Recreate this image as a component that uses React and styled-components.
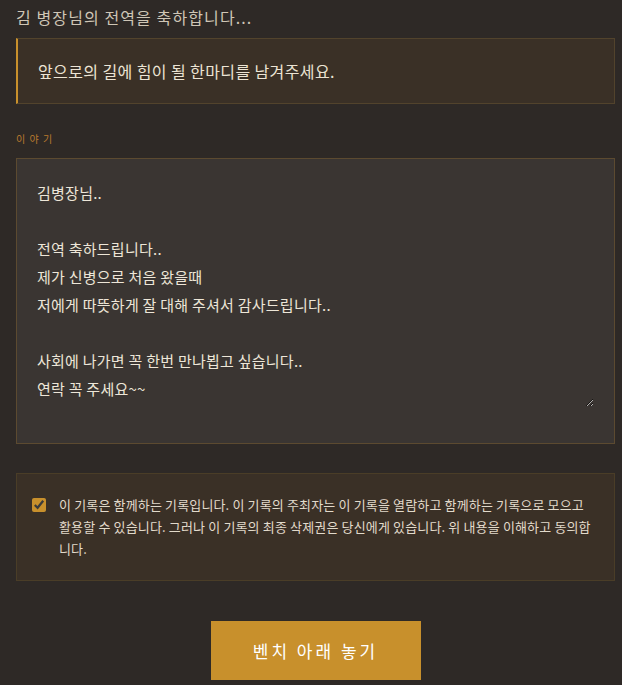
import React, {useState} from 'react';
import styled, {createGlobalStyle} from "styled-components";

const gold = "#c8902c"
const font = `"Noto Sans CJK KR", "Noto Sans", sans-serif`

const story = `김병장님..

전역 축하드립니다..
제가 신병으로 처음 왔을때
저에게 따뜻하게 잘 대해 주셔서 감사드립니다..

사회에 나가면 꼭 한번 만나뵙고 싶습니다..
연락 꼭 주세요~~`

const App = () => {
    const [text, setText] = useState(story)
    const [agree, setAgree] = useState(true)

    return (
        <>
            <GlobalStyle/>
            <Page>
                <Title>김 병장님의 전역을 축하합니다...</Title>
                <Quote>앞으로의 길에 힘이 될 한마디를 남겨주세요.</Quote>
                <Label>이 야 기</Label>
                <StoryBox>
                    <Story value={text} onChange={e => setText(e.target.value)}/>
                </StoryBox>
                <Consent>
                    <Check type="checkbox" checked={agree} onChange={e => setAgree(e.target.checked)}/>
                    <ConsentText>
                        이 기록은 함께하는 기록입니다. 이 기록의 주최자는 이 기록을 열람하고 함께하는 기록으로 모으고
                        활용할 수 있습니다. 그러나 이 기록의 최종 삭제권은 당신에게 있습니다. 위 내용을 이해하고 동의합니다.
                    </ConsentText>
                </Consent>
                <Actions>
                    <Button>벤치 아래 놓기</Button>
                </Actions>
            </Page>
        </>
    );
};

const GlobalStyle = createGlobalStyle`
body{
margin:0;
background:#2e2926;
font-family:${font};
}
`
const Page = styled.div`
width:599px;
padding:5px 0 0 16px;
display:flex;
flex-direction:column;
`
const Title = styled.div`
font-size:16px;
line-height:24px;
letter-spacing:1.1px;
color:#cfc6b6;
margin-bottom:9px;
`
const Quote = styled.div`
background:#3a3026;
border:1px solid #52432c;
border-left:2px solid ${gold};
padding:0 20px;
height:64px;
display:flex;
align-items:center;
font-size:16px;
letter-spacing:0.4px;
color:#ece4d4;
`
const Label = styled.div`
margin-top:28px;
font-size:10px;
line-height:14px;
letter-spacing:1px;
color:#b97a2e;
`
const StoryBox = styled.div`
margin-top:12px;
box-sizing:border-box;
height:286px;
background:#3a3532;
border:1px solid #5c4a30;
padding:20px 20px 36px 20px;
`
const Story = styled.textarea`
box-sizing:border-box;
width:100%;
height:228px;
background:transparent;
border:none;
padding:0;
font-family:${font};
font-size:15px;
line-height:28px;
letter-spacing:0.25px;
color:#ede6d8;
outline:none;
resize:vertical;
display:block;
`
const Consent = styled.label`
margin-top:29px;
background:#3a3026;
border:1px solid #4a3d27;
padding:20px 20px 20px 15px;
display:flex;
gap:13px;
align-items:flex-start;
`
const Check = styled.input`
accent-color:${gold};
width:14px;
height:14px;
margin:4px 0 0 0;
flex-shrink:0;
`
const ConsentText = styled.div`
font-size:13px;
line-height:22px;
letter-spacing:0.15px;
color:#e2dacb;
`
const Actions = styled.div`
display:flex;
justify-content:center;
margin-top:40px;
`
const Button = styled.button`
width:210px;
height:59px;
background:${gold};
border:none;
color:#fff;
font-family:${font};
font-size:17px;
letter-spacing:3px;
cursor:pointer;
`

export default App;
